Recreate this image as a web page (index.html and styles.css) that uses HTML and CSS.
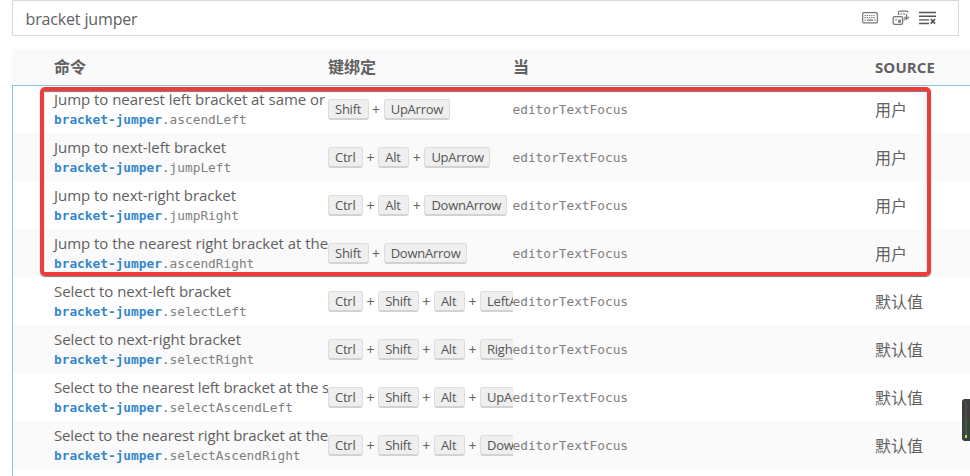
FILE: index.html
```html
<!DOCTYPE html>
<html lang="zh-CN">
<head>
<meta charset="utf-8">
<title>Keyboard Shortcuts</title>
<link rel="stylesheet" href="styles.css">
</head>
<body>
<div class="search">
  <span class="query">bracket jumper</span>
  <div class="actions">
    <svg class="icon-keyboard" width="16" height="12" viewBox="0 0 16 12"><rect x=".7" y=".7" width="14.6" height="10.2" rx="1" fill="#fff" stroke="#777" stroke-width="1.2"/><path d="M2.5 3.5h11M2.5 5.7h11" stroke="#777" stroke-width="1.2" stroke-dasharray="1.3 .9"/><path d="M2.5 8.2h1.3M5 8.2h6M12.2 8.2h1.3" stroke="#777" stroke-width="1.2"/></svg>
    <svg class="icon-sort" width="18" height="16" viewBox="0 0 18 16" fill="none" stroke="#777" stroke-width="1.3"><path d="M6.5 5V2.7Q6.5 1.2 8 1.2h6.5q1.4 0 1.4 1.4"/><path d="M11.6 9.6h1.6"/><rect x="1.2" y="6.7" width="9.4" height="7.6" rx="1.4"/><path d="M9.2 3.2v1.6M12 3v1.8M4 8.8v1.6M6.8 10.4h1.6v1.6H6.8z"/><path d="M14.5 3.8v5.2M12.3 7l2.2 2.2L16.8 7"/></svg>
    <svg class="icon-clear" width="18" height="14" viewBox="0 0 18 14" fill="none" stroke="#555" stroke-width="1.4"><path d="M0 1.5h17M0 5.2h17M0 8.9h10M0 12.5h10"/><path stroke-width="1.7" d="M11.8 8l4.2 4.6M16 8l-4.2 4.6"/></svg>
  </div>
</div>
<div class="table">
  <div class="row head"><div>命令</div><div>键绑定</div><div>当</div><div class="latin">SOURCE</div></div>
  <div class="list">
    <div class="row"><div class="command"><p>Jump to nearest left bracket at same or</p><code><b>bracket-jumper</b>.ascendLeft</code></div><div class="keys"><kbd class="shift">Shift</kbd><i>+</i><kbd class="up">UpArrow</kbd></div><code class="when">editorTextFocus</code><div class="source">用户</div></div>
    <div class="row"><div class="command"><p>Jump to next-left bracket</p><code><b>bracket-jumper</b>.jumpLeft</code></div><div class="keys"><kbd class="ctrl">Ctrl</kbd><i>+</i><kbd class="alt">Alt</kbd><i>+</i><kbd class="up">UpArrow</kbd></div><code class="when">editorTextFocus</code><div class="source">用户</div></div>
    <div class="row"><div class="command"><p>Jump to next-right bracket</p><code><b>bracket-jumper</b>.jumpRight</code></div><div class="keys"><kbd class="ctrl">Ctrl</kbd><i>+</i><kbd class="alt">Alt</kbd><i>+</i><kbd class="down">DownArrow</kbd></div><code class="when">editorTextFocus</code><div class="source">用户</div></div>
    <div class="row"><div class="command"><p>Jump to the nearest right bracket at the</p><code><b>bracket-jumper</b>.ascendRight</code></div><div class="keys"><kbd class="shift">Shift</kbd><i>+</i><kbd class="down">DownArrow</kbd></div><code class="when">editorTextFocus</code><div class="source">用户</div></div>
    <div class="row"><div class="command"><p>Select to next-left bracket</p><code><b>bracket-jumper</b>.selectLeft</code></div><div class="keys"><kbd class="ctrl">Ctrl</kbd><i>+</i><kbd class="shift">Shift</kbd><i>+</i><kbd class="alt">Alt</kbd><i>+</i><kbd class="up">LeftArrow</kbd></div><code class="when">editorTextFocus</code><div class="source">默认值</div></div>
    <div class="row"><div class="command"><p>Select to next-right bracket</p><code><b>bracket-jumper</b>.selectRight</code></div><div class="keys"><kbd class="ctrl">Ctrl</kbd><i>+</i><kbd class="shift">Shift</kbd><i>+</i><kbd class="alt">Alt</kbd><i>+</i><kbd class="up">RightArrow</kbd></div><code class="when">editorTextFocus</code><div class="source">默认值</div></div>
    <div class="row"><div class="command"><p class="tight">Select to the nearest left bracket at the s</p><code><b>bracket-jumper</b>.selectAscendLeft</code></div><div class="keys"><kbd class="ctrl">Ctrl</kbd><i>+</i><kbd class="shift">Shift</kbd><i>+</i><kbd class="alt">Alt</kbd><i>+</i><kbd class="up">UpArrow</kbd></div><code class="when">editorTextFocus</code><div class="source">默认值</div></div>
    <div class="row"><div class="command"><p class="tight">Select to the nearest right bracket at the</p><code><b>bracket-jumper</b>.selectAscendRight</code></div><div class="keys"><kbd class="ctrl">Ctrl</kbd><i>+</i><kbd class="shift">Shift</kbd><i>+</i><kbd class="alt">Alt</kbd><i>+</i><kbd class="down">DownArrow</kbd></div><code class="when">editorTextFocus</code><div class="source">默认值</div></div>
  </div>
</div>
<div class="highlight"></div>
<div class="meter"></div>
</body>
</html>
```
FILE: styles.css
```css
* { box-sizing: border-box; }
body { margin: 0; height: 476px; overflow: hidden; position: relative; background: #fff; color: #616161; font: 15px "Open Sans", "Noto Sans CJK SC", sans-serif; }
.search { width: 947px; height: 36px; margin-left: 12px; border: 1px solid #d9d9d9; padding: 0 21px 0 12.5px; display: flex; justify-content: space-between; align-items: center; }
.query { font-size: 16px; letter-spacing: -.15px; padding-top: 2px; }
.actions { display: flex; align-items: center; height: 34px; }
.icon-keyboard { margin-right: 14px; }
.icon-sort { margin-right: 9px; }
.actions svg { display: block; flex: none; }
.table { margin: 13px 0 0 12px; }
.row { height: 48px; display: grid; grid-template-columns: 274px 185px 362px 1fr; align-items: center; padding-left: 41px; }
.head { height: 36px; padding-left: 42px; background: #fafafa; font-weight: 700; font-size: 16px; }
.head > div { margin-top: -2px; }
.head > .latin { font-size: 15px; letter-spacing: .1px; margin: 0; }
.list { border-left: 1px solid #90c2e7; height: 391px; box-shadow: inset 0 1px #90c2e7; }
.list .row:nth-child(even) { background: #fafafa; }
.command { overflow: hidden; white-space: nowrap; height: 48px; padding: 4px 0 0 4px; margin-left: -4px; }
.command p { margin: 0; font-size: 15px; line-height: 20px; letter-spacing: -.04px; }
.command .tight { letter-spacing: -.16px; }
code { display: block; font: 12.8px/18px "DejaVu Sans Mono", monospace; color: #808080; }
.command code { margin-top: 2px; }
.command b { color: #3586ce; }
.when { padding-top: 1px; margin-left: -.5px; }
.keys { display: flex; overflow: hidden; height: 21px; margin-top: 1px; }
kbd { flex: none; height: 21px; padding-left: 6px; border: 1px solid #ddd; border-bottom: 2px solid #d2d2d2; border-radius: 3px; background: #efefef; color: #555; font: 13px/18px "Open Sans", sans-serif; letter-spacing: -.25px; white-space: nowrap; }
.keys i { flex: none; width: 15.2px; text-align: center; font-style: normal; font-size: 14px; line-height: 21px; }
.ctrl { width: 35px; }
.shift { width: 40.5px; }
.alt { width: 31px; }
.up { width: 66px; }
.down { width: 83px; }
.source { font-size: 16px; margin-top: -1px; }
.highlight { position: absolute; left: 40px; top: 87px; width: 891px; height: 189px; border: 4px solid #f03b3b; border-radius: 5px; box-shadow: 0 1px 1px #777, inset 0 1px 1px #777; }
.meter { position: absolute; left: 962px; top: 399px; width: 12px; height: 42px; border-radius: 3px; background: linear-gradient(#9bef32, #9bef32) 3px 36px / 2px 3px no-repeat, linear-gradient(#5c4633 50%, #3b6132 50%) 3px 3px / 2px 36px no-repeat, #3c4043; }
```
